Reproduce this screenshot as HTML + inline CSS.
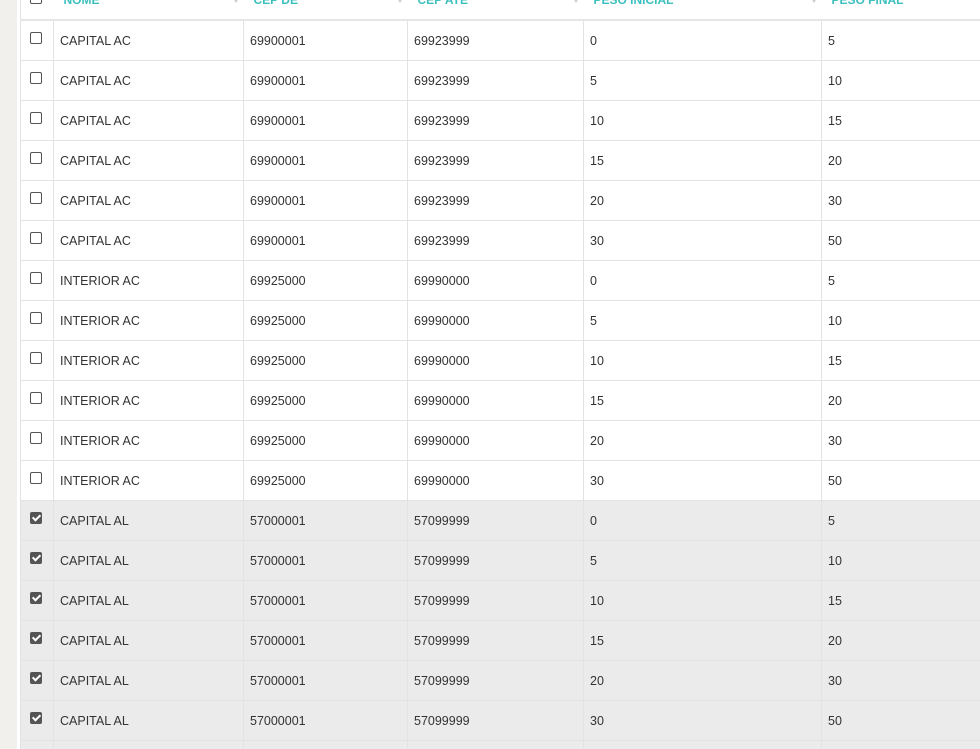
<!DOCTYPE html>
<html><head><style>
html,body{margin:0;width:980px;height:749px;overflow:hidden}
body{background:#fff;font-family:"Liberation Sans",sans-serif;position:relative}
.strip{position:absolute;left:0;top:0;width:17px;height:749px;background:#f1f0ed}
table{position:absolute;left:20px;top:-20px;border-collapse:collapse;table-layout:fixed;width:980px}
td,th{border:1px solid #e3e3e6;height:39px;padding:0 0 0 6px;font-size:12.5px;color:#333;text-align:left;vertical-align:middle;white-space:nowrap;overflow:hidden}
th{color:#3bbfbf;font-weight:bold;font-size:12px;padding-left:10px;position:relative;border-bottom:2px solid #e6e6e8;border-left:none;border-right:none;height:38px}
th .s{position:absolute;right:5px;top:17px;width:0;height:0;border-left:3px solid transparent;border-right:3px solid transparent;border-top:5px solid #ccc}
td:first-child,th:first-child{padding:0;text-align:center;border-left:1px solid #e3e3e6}
.cb{display:inline-block;width:10px;height:10px;border:1px solid #555;border-radius:2px;vertical-align:middle;margin-top:-6px;margin-left:-2px}
.ck{background:#555;position:relative}
.ck:after{content:"";position:absolute;left:3px;top:0px;width:3px;height:6px;border:solid #fff;border-width:0 2px 2px 0;transform:rotate(45deg)}
tr.g td{background:#ebebeb}
</style></head><body>
<div class="strip"></div>
<table>
<colgroup><col style="width:33px"><col style="width:190px"><col style="width:164px"><col style="width:176px"><col style="width:238px"><col style="width:179px"></colgroup>
<tr><th><span class="cb"></span></th><th>NOME<span class="s"></span></th><th>CEP DE<span class="s"></span></th><th>CEP ATÉ<span class="s"></span></th><th>PESO INICIAL<span class="s"></span></th><th>PESO FINAL</th></tr>
<tr><td><span class="cb"></span></td><td>CAPITAL AC</td><td>69900001</td><td>69923999</td><td>0</td><td>5</td></tr>
<tr><td><span class="cb"></span></td><td>CAPITAL AC</td><td>69900001</td><td>69923999</td><td>5</td><td>10</td></tr>
<tr><td><span class="cb"></span></td><td>CAPITAL AC</td><td>69900001</td><td>69923999</td><td>10</td><td>15</td></tr>
<tr><td><span class="cb"></span></td><td>CAPITAL AC</td><td>69900001</td><td>69923999</td><td>15</td><td>20</td></tr>
<tr><td><span class="cb"></span></td><td>CAPITAL AC</td><td>69900001</td><td>69923999</td><td>20</td><td>30</td></tr>
<tr><td><span class="cb"></span></td><td>CAPITAL AC</td><td>69900001</td><td>69923999</td><td>30</td><td>50</td></tr>
<tr><td><span class="cb"></span></td><td>INTERIOR AC</td><td>69925000</td><td>69990000</td><td>0</td><td>5</td></tr>
<tr><td><span class="cb"></span></td><td>INTERIOR AC</td><td>69925000</td><td>69990000</td><td>5</td><td>10</td></tr>
<tr><td><span class="cb"></span></td><td>INTERIOR AC</td><td>69925000</td><td>69990000</td><td>10</td><td>15</td></tr>
<tr><td><span class="cb"></span></td><td>INTERIOR AC</td><td>69925000</td><td>69990000</td><td>15</td><td>20</td></tr>
<tr><td><span class="cb"></span></td><td>INTERIOR AC</td><td>69925000</td><td>69990000</td><td>20</td><td>30</td></tr>
<tr><td><span class="cb"></span></td><td>INTERIOR AC</td><td>69925000</td><td>69990000</td><td>30</td><td>50</td></tr>
<tr class="g"><td><span class="cb ck"></span></td><td>CAPITAL AL</td><td>57000001</td><td>57099999</td><td>0</td><td>5</td></tr>
<tr class="g"><td><span class="cb ck"></span></td><td>CAPITAL AL</td><td>57000001</td><td>57099999</td><td>5</td><td>10</td></tr>
<tr class="g"><td><span class="cb ck"></span></td><td>CAPITAL AL</td><td>57000001</td><td>57099999</td><td>10</td><td>15</td></tr>
<tr class="g"><td><span class="cb ck"></span></td><td>CAPITAL AL</td><td>57000001</td><td>57099999</td><td>15</td><td>20</td></tr>
<tr class="g"><td><span class="cb ck"></span></td><td>CAPITAL AL</td><td>57000001</td><td>57099999</td><td>20</td><td>30</td></tr>
<tr class="g"><td><span class="cb ck"></span></td><td>CAPITAL AL</td><td>57000001</td><td>57099999</td><td>30</td><td>50</td></tr>
<tr class="g"><td></td><td></td><td></td><td></td><td></td><td></td></tr>
</table>
</body></html>
